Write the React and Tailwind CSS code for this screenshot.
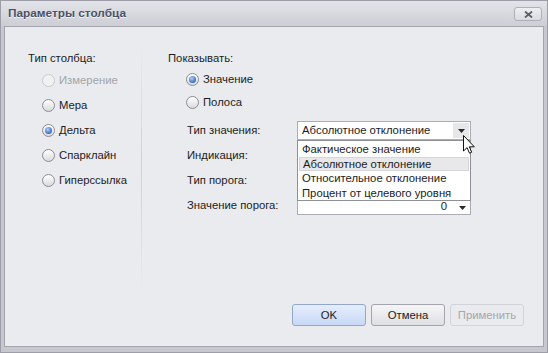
import React from "react";

const font = { fontFamily: '"Liberation Sans", Arial, sans-serif' };

const Radio = ({ checked, disabled, label }) => (
    <div className="flex items-center h-full">
        <span
            className={
                "w-[13px] h-[13px] rounded-full border flex items-center justify-center " +
                (disabled
                    ? "border-[#c9cacd] bg-[#f1f1f2]"
                    : "border-[#8b8d92] bg-gradient-to-b from-[#ffffff] to-[#d9dadd]")
            }
        >
            {checked && (
                <span className="w-[7px] h-[7px] rounded-full bg-[radial-gradient(circle_at_40%_35%,#b7d0f5,#3f72c8_65%,#2c58a8)]" />
            )}
        </span>
        <span className={"ml-[4px] text-[11.3px] " + (disabled ? "text-[#a3a4a8]" : "text-[#1c1c1c]")}>{label}</span>
    </div>
)

const Arrow = () => (
    <svg width="7" height="4" viewBox="0 0 7 4"><path d="M0 0h7L3.5 4z" fill="#2a2a2a" /></svg>
)

const Combo = ({ text, hover }) => (
    <div className="w-[174px] h-[19px] border border-[#abadb3] bg-white flex items-center">
        <span className="flex-1 pl-[4px] text-[11.3px] text-[#1c1c1c] leading-none">{text}</span>
        <span className={"w-[16px] h-[15px] mr-[1px] flex items-center justify-center " + (hover ? "bg-[#e6e7ea]" : "")}>
            <Arrow />
        </span>
    </div>
)

const App = () => {
    return (
        <div style={font} className="w-[548px] h-[353px] flex flex-col bg-[#c7c8cf] border border-[#9d9ea7]">
            {/* title bar */}
            <div className="h-[25px] flex items-center justify-between pl-[7px] pr-[5px] bg-gradient-to-b from-[#e3e4e9] to-[#cdced5]">
                <span className="text-[11.8px] font-bold text-[#4b5168] [text-shadow:0_1px_0_#f4f4f6]">Параметры столбца</span>
                <span className="w-[28px] h-[14px] mt-[1px] rounded-[3px] border border-[#adaeb6] bg-gradient-to-b from-[#eeeff2] to-[#dadbe0] flex items-center justify-center">
                    <svg width="9" height="7" viewBox="0 0 9 7"><path d="M1 0.5l7 6M8 0.5l-7 6" stroke="#5b5e6c" strokeWidth="1.8" /></svg>
                </span>
            </div>

            {/* panel */}
            <div className="relative flex-1 mx-[3px] mb-[5px] flex flex-col bg-[#eaebef] border border-[#a3a4ac]">
                <div className="h-[273px] flex">
                    <div className="w-[136px] pl-[23px] pt-[24px]">
                        <div className="text-[11.3px] leading-[15px] text-[#1c1c1c]">Тип столбца:</div>
                        <div className="mt-[2px] pl-[14px]">
                            <div className="h-[25px]"><Radio disabled label="Измерение" /></div>
                            <div className="h-[25px]"><Radio label="Мера" /></div>
                            <div className="h-[25px]"><Radio checked label="Дельта" /></div>
                            <div className="h-[25px]"><Radio label="Спарклайн" /></div>
                            <div className="h-[25px]"><Radio label="Гиперссылка" /></div>
                        </div>
                    </div>
                    <div className="w-px mt-[13px] h-[255px] bg-gradient-to-b from-[#eaebef] via-[#cfd0d6] to-[#eaebef]" />
                    <div className="flex-1 pl-[26px] pt-[24px]">
                        <div className="text-[11.3px] leading-[15px] text-[#1c1c1c]">Показывать:</div>
                        <div className="mt-[2px] pl-[18px]">
                            <div className="h-[23px]"><Radio checked label="Значение" /></div>
                            <div className="h-[23px]"><Radio label="Полоса" /></div>
                        </div>
                        <div className="mt-[4px] pl-[19px]">
                            <div className="h-[25px] flex items-center">
                                <span className="w-[110px] text-[11.3px] text-[#1c1c1c]">Тип значения:</span>
                                <Combo text="Абсолютное отклонение" hover />
                            </div>
                            <div className="h-[25px] flex items-center">
                                <span className="w-[110px] text-[11.3px] text-[#1c1c1c]">Индикация:</span>
                                <Combo text="" />
                            </div>
                            <div className="h-[25px] flex items-center">
                                <span className="w-[110px] text-[11.3px] text-[#1c1c1c]">Тип порога:</span>
                                <Combo text="" />
                            </div>
                            <div className="h-[25px] flex items-center">
                                <span className="w-[110px] text-[11.3px] text-[#1c1c1c]">Значение порога:</span>
                                <div className="w-[174px] h-[18px] border border-[#abadb3] bg-white flex items-center justify-end">
                                    <span className="text-[11.3px] leading-none text-[#1c1c1c] mr-[7px] mt-[3px]">0</span>
                                    <span className="w-[16px] flex items-center justify-center mt-[5px]"><Arrow /></span>
                                </div>
                            </div>
                        </div>
                    </div>
                </div>

                <div className="flex-1 flex items-end justify-end gap-[5px] pr-[19px] pb-[20px]">
                    <button className="w-[74px] h-[22px] rounded-[3px] border border-[#94a6c9] bg-gradient-to-b from-[#e6eefc] to-[#c8d8f5] text-[11.3px] text-[#1c1c1c]">OK</button>
                    <button className="w-[74px] h-[22px] rounded-[3px] border border-[#a3a4ac] bg-gradient-to-b from-[#f5f5f7] to-[#dfe0e4] text-[11.3px] text-[#1c1c1c]">Отмена</button>
                    <button className="w-[74px] h-[22px] rounded-[3px] border border-[#d2d3d8] bg-[#eaebef] text-[11.3px] text-[#a5a6ab]">Применить</button>
                </div>

                {/* open dropdown list */}
                <div className="absolute left-[292px] top-[113px] w-[174px] h-[61px] border border-[#8f9197] bg-white py-[1px] px-[1px]">
                    <div className="h-[14.5px] leading-[14.5px] pl-[3px] text-[11.3px] text-[#1c1c1c]">Фактическое значение</div>
                    <div className="h-[14.5px] leading-[13px] pl-[3px] text-[11.3px] text-[#1c1c1c] bg-[#e8e8ea] border border-[#d6d6da]">Абсолютное отклонение</div>
                    <div className="h-[14.5px] leading-[14.5px] pl-[3px] text-[11.3px] text-[#1c1c1c]">Относительное отклонение</div>
                    <div className="h-[14.5px] leading-[14.5px] pl-[3px] text-[11.3px] text-[#1c1c1c]">Процент от целевого уровня</div>
                </div>

                {/* mouse cursor */}
                <svg className="absolute left-[458px] top-[108px]" width="13" height="20" viewBox="0 0 13 20">
                    <path d="M0.5 0.5v15.5l3.6-3.4 2.4 5.6 2.2-1-2.4-5.4h5z" fill="#fff" stroke="#111" strokeWidth="1" strokeLinejoin="round" />
                </svg>
            </div>
        </div>
    )
}
export default App
